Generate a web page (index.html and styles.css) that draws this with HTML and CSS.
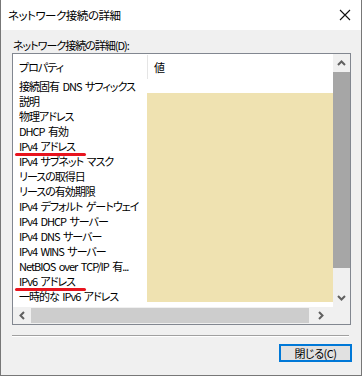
FILE: index.html
```html
<!DOCTYPE html>
<html lang="ja">

<head>
    <meta http-equiv="Content-Type" content="text/html; charset=utf-8" />
    <title>ネットワーク接続の詳細</title>
    <link rel="stylesheet" href="styles.css">
</head>

<body>
    <div class="window">
        <div class="titlebar">
            <span class="title">ネットワーク接続の詳細</span>
            <span class="close">
                <svg width="12" height="12" viewBox="0 0 12 12"><path d="M1 1L11 11M11 1L1 11" stroke="#111" stroke-width="1.1" fill="none"/></svg>
            </span>
        </div>
        <div class="content">
            <div class="label">ネットワーク接続の詳細(D):</div>
            <div class="listbox">
                <div class="view">
                    <div class="head">
                        <div class="col-prop">プロパティ</div>
                        <div class="col-val">値</div>
                    </div>
                    <ul class="rows">
                        <li>接続固有 DNS サフィックス</li>
                        <li>説明</li>
                        <li>物理アドレス</li>
                        <li>DHCP 有効</li>
                        <li class="marked">IPv4 アドレス</li>
                        <li>IPv4 サブネット マスク</li>
                        <li>リースの取得日</li>
                        <li>リースの有効期限</li>
                        <li>IPv4 デフォルト ゲートウェイ</li>
                        <li>IPv4 DHCP サーバー</li>
                        <li>IPv4 DNS サーバー</li>
                        <li>IPv4 WINS サーバー</li>
                        <li>NetBIOS over TCP/IP 有...</li>
                        <li class="marked">IPv6 アドレス</li>
                        <li>一時的な IPv6 アドレス</li>
                    </ul>
                    <!-- 値の列は黄色で塗りつぶし -->
                    <div class="mask"></div>
                </div>
                <div class="vscroll">
                    <span class="arrow">
                        <svg width="9" height="6" viewBox="0 0 9 6"><path d="M1 5L4.5 1.5L8 5" stroke="#606060" stroke-width="2" fill="none"/></svg>
                    </span>
                    <div class="vthumb"></div>
                    <div class="vrest"></div>
                    <span class="arrow">
                        <svg width="9" height="6" viewBox="0 0 9 6"><path d="M1 1L4.5 4.5L8 1" stroke="#606060" stroke-width="2" fill="none"/></svg>
                    </span>
                </div>
                <div class="hscroll">
                    <span class="harrow">
                        <svg width="6" height="9" viewBox="0 0 6 9"><path d="M5 1L1.5 4.5L5 8" stroke="#606060" stroke-width="2" fill="none"/></svg>
                    </span>
                    <div class="hthumb"></div>
                    <span class="harrow wide">
                        <svg width="6" height="9" viewBox="0 0 6 9"><path d="M1 1L4.5 4.5L1 8" stroke="#606060" stroke-width="2" fill="none"/></svg>
                    </span>
                </div>
                <div class="corner"></div>
            </div>
            <div class="sep"></div>
            <div class="buttons">
                <button class="btn">閉じる(C)</button>
            </div>
        </div>
    </div>
</body>

</html>
```

FILE: styles.css
```css
html,
body {
    margin: 0px;
    background: #f0f0f0;
}

body {
    font-family: "Noto Sans CJK JP", "Liberation Sans", sans-serif;
    font-size: 11px;
    letter-spacing: -1px;
    word-spacing: 2px;
    font-feature-settings: "palt";
    color: #000;
}

.window {
    width: 362px;
    height: 376px;
    box-sizing: border-box;
    border: 1px solid #777;
    border-top: none;
    background: #f0f0f0;
}

.titlebar {
    height: 30px;
    background: #fff;
    display: flex;
    align-items: center;
    justify-content: space-between;
    padding: 0 10px 0 7px;
}

.title {
    font-size: 11.5px;
    letter-spacing: -0.5px;
    line-height: 14px;
}

.close {
    display: flex;
}

.content {
    padding: 8px 10px 0 11px;
}

.label {
    height: 14px;
    line-height: 14px;
    margin-bottom: 1px;
    padding-left: 1px;
}

.listbox {
    width: 339px;
    height: 272px;
    box-sizing: border-box;
    border: 1px solid #828790;
    background: #fff;
    display: grid;
    grid-template-columns: 320px 17px;
    grid-template-rows: 253px 17px;
}

.view {
    position: relative;
    overflow: hidden;
}

.head {
    height: 25px;
    display: flex;
    align-items: center;
}

.col-prop {
    width: 128px;
    padding-left: 6px;
    height: 24px;
    line-height: 24px;
    border-right: 1px solid #e5e5e5;
}

.col-val {
    padding-left: 6px;
}

.rows {
    list-style: none;
    margin: 0;
    padding: 0;
}

.rows li {
    position: relative;
    height: 15px;
    line-height: 15px;
    padding-left: 6px;
    white-space: nowrap;
}

.rows li.marked::after {
    content: "";
    position: absolute;
    left: 2px;
    bottom: -2px;
    width: 71px;
    height: 3px;
    border-radius: 2px;
    background: #e8141e;
}

.mask {
    position: absolute;
    left: 134px;
    top: 39px;
    width: 186px;
    height: 209px;
    background: #efe2b1;
}

.vscroll {
    background: #f0f0f0;
    display: flex;
    flex-direction: column;
}

.arrow {
    height: 18px;
    display: flex;
    align-items: center;
    justify-content: center;
}

.vthumb {
    height: 196px;
    background: #a6a6a6;
}

.vrest {
    flex: 1;
}

.hscroll {
    background: #f0f0f0;
    display: flex;
    align-items: stretch;
}

.harrow {
    width: 18px;
    display: flex;
    align-items: center;
    justify-content: center;
}

.harrow.wide {
    width: 24px;
}

.hthumb {
    flex: 1;
    margin: 1px 0;
    background: #cdcdcd;
}

.corner {
    background: #f0f0f0;
}

.sep {
    width: 337px;
    height: 1px;
    margin-top: 10px;
    background: #a0a0a0;
    border-bottom: 1px solid #fff;
}

.buttons {
    display: flex;
    justify-content: flex-end;
    padding-top: 7px;
    width: 340px;
}

.btn {
    width: 73px;
    height: 18px;
    box-sizing: border-box;
    border: 2px solid #0078d7;
    background: #e1e1e1;
    font-family: inherit;
    font-size: 11px;
    letter-spacing: -0.5px;
    font-feature-settings: "palt";
    line-height: 12px;
    padding: 0;
    color: #000;
}
```
